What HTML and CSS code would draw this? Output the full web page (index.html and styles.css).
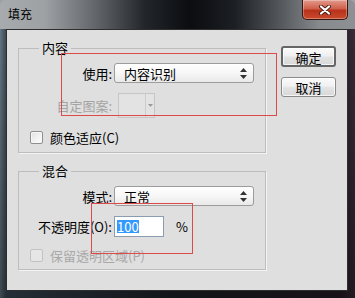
FILE: index.html
```html
<!DOCTYPE html>
<html lang="zh-CN">
<head>
    <meta charset="UTF-8">
    <meta name="viewport" content="width=device-width, initial-scale=1.0">
    <title>填充</title>
    <link rel="stylesheet" href="styles.css">
</head>
<body>
<div class="window">
    <div class="titlebar">
        <span class="title">填充</span>
        <button class="close-btn" type="button">
            <svg width="14" height="10" viewBox="0 0 14 10">
                <path d="M3 1.5 L11 8.5 M11 1.5 L3 8.5" stroke="#4a1d14" stroke-width="4" stroke-linecap="round"/>
                <path d="M3 1.5 L11 8.5 M11 1.5 L3 8.5" stroke="#ffffff" stroke-width="2.2" stroke-linecap="round"/>
            </svg>
        </button>
    </div>

    <div class="client">
        <div class="groups">
            <fieldset class="group group-content">
                <legend>内容</legend>
                <div class="row">
                    <label class="row-label">使用:</label>
                    <div class="select">
                        <span>内容识别</span>
                        <svg class="updown" width="7" height="11" viewBox="0 0 7 11"><path d="M3.5 0 L7 4 L0 4 Z M0 7 L7 7 L3.5 11 Z" fill="#333"/></svg>
                    </div>
                </div>
                <div class="row row-pattern">
                    <label class="row-label disabled">自定图案:</label>
                    <div class="pattern">
                        <span class="swatch"></span>
                        <span class="pattern-drop"><svg width="5" height="3" viewBox="0 0 5 3"><path d="M0 0 L5 0 L2.5 3 Z" fill="#9a9a9a"/></svg></span>
                    </div>
                </div>
                <div class="check-row">
                    <span class="checkbox"></span>
                    <span>颜色适应(C)</span>
                </div>
            </fieldset>

            <fieldset class="group group-blend">
                <legend>混合</legend>
                <div class="row">
                    <label class="row-label">模式:</label>
                    <div class="select">
                        <span>正常</span>
                        <svg class="updown" width="7" height="11" viewBox="0 0 7 11"><path d="M3.5 0 L7 4 L0 4 Z M0 7 L7 7 L3.5 11 Z" fill="#333"/></svg>
                    </div>
                </div>
                <div class="row row-opacity">
                    <label class="row-label">不透明度(O):</label>
                    <div class="text-input"><span class="selected-text">100</span></div>
                    <span class="unit">%</span>
                </div>
                <div class="check-row check-disabled">
                    <span class="checkbox"></span>
                    <span>保留透明区域(P)</span>
                </div>
            </fieldset>
        </div>

        <div class="buttons">
            <button class="btn btn-default" type="button">确定</button>
            <button class="btn" type="button">取消</button>
        </div>
    </div>

    <!-- red annotation boxes drawn over the dialog -->
    <div class="mark mark-use"></div>
    <div class="mark mark-opacity"></div>
</div>
</body>
</html>
```

FILE: styles.css
```css
body {
    margin: 0;
    background: #9ea2a5;
    font-family: "Noto Sans CJK SC", "Noto Sans", sans-serif;
    font-size: 13px;
    color: #000;
}
.window {
    position: relative;
    width: 355px;
    height: 298px;
    display: flex;
    flex-direction: column;
    border-radius: 6px 6px 0 0;
    background:
        linear-gradient(to right, #a7abae 0, #9da1a4 45px, #5d6165 100px, #22262a 145px, #0b0d10 190px, #1c1f23 235px, #54585c 280px, #878b8e 320px, #8e9194 355px) top / 100% 29px no-repeat,
        linear-gradient(to bottom, rgba(0,0,0,0) 0, rgba(0,0,0,0.4) 100%),
        linear-gradient(to right, #6a7a86 0, #3c4c58 6px, #1c2228 50%, #271c26 96%, #3a2e38 100%);
}
.titlebar {
    height: 29px;
    display: flex;
    justify-content: space-between;
    align-items: flex-start;
    padding-left: 8px;
}
.title {
    font-size: 12px;
    line-height: 14px;
    margin-top: 7px;
}
.close-btn {
    width: 46px;
    height: 20px;
    margin-right: 7px;
    padding: 0;
    border: 1px solid #3b1610;
    border-top: none;
    border-radius: 0 0 5px 5px;
    background: linear-gradient(to bottom, #e29a8c 0, #d0604b 45%, #b8321c 55%, #c94a2c 100%);
    box-shadow: inset 0 0 0 1px rgba(255,255,255,0.3);
    display: flex;
    align-items: center;
    justify-content: center;
}
.client {
    flex: 1;
    margin: 0 7px 7px 6px;
    border: 1px solid #2e2e2e;
    background: #dfdfdf;
    display: grid;
    grid-template-columns: 248px 55px;
    column-gap: 15px;
    align-items: start;
    padding: 11px 0 0 11px;
}
.group {
    margin: 0;
    padding: 8px 0 8px 0;
    border: 1px solid #bdbdbd;
    box-shadow: 1px 1px 0 #f4f4f4;
    min-width: 0;
}
.group legend {
    margin-left: 20px;
    padding: 0 3px;
    line-height: 14px;
}
.group-blend {
    margin-top: 11px;
    padding-bottom: 7px;
}
.row {
    display: flex;
    align-items: center;
}
.row-label {
    width: 93px;
    padding-right: 2px;
    text-align: right;
    white-space: nowrap;
}
.disabled {
    color: #a4a4a4;
}
.select {
    box-sizing: border-box;
    width: 140px;
    height: 20px;
    padding: 0 6px 0 9px;
    border: 1px solid #9c9c9c;
    border-radius: 3px;
    background: linear-gradient(to bottom, #ffffff 0, #f7f7f7 50%, #e9e9e9 100%);
    display: flex;
    align-items: center;
    justify-content: space-between;
}
.row-pattern {
    margin-top: 10px;
}
.pattern {
    margin-left: 4px;
    height: 23px;
    display: flex;
    border: 1px solid #c5c5c5;
    background: #e3e3e3;
}
.swatch {
    width: 26px;
    border-right: 1px solid #cbcbcb;
}
.pattern-drop {
    width: 8px;
    display: flex;
    align-items: center;
    justify-content: center;
}
.check-row {
    margin-top: 13px;
    padding-left: 11px;
    height: 13px;
    display: flex;
    align-items: center;
    gap: 7px;
}
.checkbox {
    width: 11px;
    height: 11px;
    border: 1px solid #8e8f8f;
    border-radius: 2px;
    background: linear-gradient(135deg, #e2e2e2, #ffffff);
    box-shadow: inset 0 0 0 1px #f6f6f6;
}
.check-disabled {
    margin-top: 12px;
    color: #a8a8a8;
}
.check-disabled .checkbox {
    border-color: #c2c2c2;
    background: #e6e6e6;
    box-shadow: none;
}
.row-opacity {
    margin-top: 10px;
}
.text-input {
    width: 46px;
    height: 19px;
    padding-left: 2px;
    border: 1px solid #8c9cb0;
    background: #fff;
    display: flex;
    align-items: center;
}
.selected-text {
    background: #3399ff;
    color: #fff;
    line-height: 13px;
}
.unit {
    margin-left: 12px;
}
.buttons {
    margin-top: 5px;
    display: flex;
    flex-direction: column;
    gap: 10px;
}
.btn {
    width: 55px;
    height: 20px;
    padding: 0;
    font: inherit;
    color: #000;
    border: 1px solid #8a8a8a;
    border-radius: 3px;
    background: linear-gradient(to bottom, #fbfbfb 0, #f0f0f0 45%, #e2e2e2 55%, #d8d8d8 100%);
    box-shadow: inset 0 0 0 1px rgba(255,255,255,0.7);
}
.btn-default {
    height: 21px;
    border: 2px solid #666;
}
.mark {
    position: absolute;
    border: 1px solid #dd4b48;
}
.mark-use {
    left: 61px;
    top: 53px;
    width: 214px;
    height: 61px;
}
.mark-opacity {
    left: 91px;
    top: 203px;
    width: 100px;
    height: 49px;
}
```
